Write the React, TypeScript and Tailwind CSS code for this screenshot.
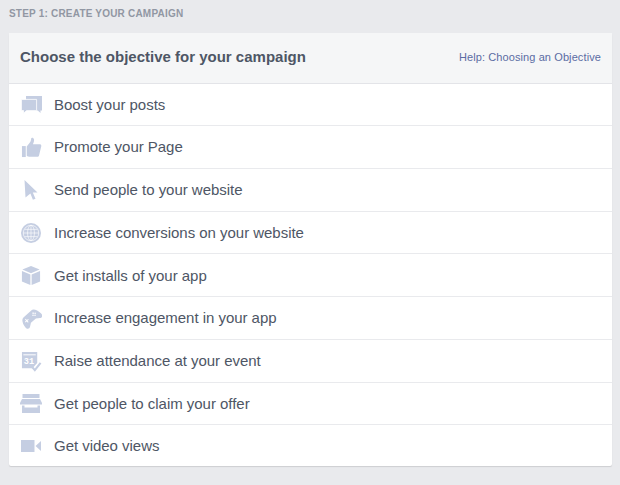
import React from 'react';

const Posts = () => (
  <svg viewBox="0 0 21 18" className="h-[18px] w-[21px]" fill="#c5cee2">
    <path d="M5 0h16v14.500h-1.500V17l-2.800-2.500H5z" />
    <path d="M0.400 3.400H15.600V14.600H5.500L2.600 17.400V14.600H0.400z" stroke="#fff" strokeWidth="0.8" />
  </svg>
);

const Thumb = () => (
  <svg viewBox="0 0 22 22" className="h-[21px] w-[21px]" fill="#c5cee2">
    <path d="M1 9.500h4v11.500H1z" />
    <path d="M6 10l3.500-4.500c.8-1.200 1-2.600 1.200-4.300.1-.9 2.900-.9 3 1.700.1 1.800-.7 3.300-1.200 4.600h7.300c1.600 0 1.700 1.900 1.300 2.800l-2.200 9c-.3 1-1 1.500-2 1.500H8.500C7.200 20.800 6 20 6 19.500z" />
  </svg>
);

const Cursor = () => (
  <svg viewBox="0 0 14 20" className="h-[20px] w-[14px]" fill="#c5cee2">
    <path d="M0.500 0 13.500 12.500H8.800l2.700 6.200-2.600 1.100-2.500-6.300L1.500 17.500z" />
  </svg>
);

const Globe = () => (
  <svg viewBox="0 0 22 22" className="h-[20px] w-[20px]" fill="#c5cee2" stroke="#fff" strokeWidth="0.7">
    <circle cx="11" cy="11" r="11" stroke="none" />
    <circle cx="11" cy="11" r="8.500" fill="none" />
    <ellipse cx="11" cy="11" rx="3.800" ry="8.500" fill="none" />
    <path d="M11 2.500v17M2.500 11h17M4 7h14M4 15h14" fill="none" />
  </svg>
);

const Box = () => (
  <svg viewBox="0 0 22 22" className="h-[21px] w-[20px]" fill="#c5cee2">
    <path d="M11 0.500 20.500 4.500 11 8.500 1.500 4.500z" />
    <path d="M1 6l9.300 3.900V21.500L1 17.500z" />
    <path d="M21 6l-9.300 3.900V21.500l9.300-4z" />
  </svg>
);

const Gamepad = () => (
  <svg viewBox="0 0 22 22" className="h-[21px] w-[21px]">
    <g transform="rotate(-42 11 11)">
      <path
        d="M5.500 4.500h11c3 0 5 4 5.500 9 .3 3-2 4.500-4 3l-3.500-2.500H7.500L4 16.500c-2 1.500-4.300 0-4-3 .5-5 2.500-9 5.500-9z"
        fill="#c5cee2"
      />
      <path d="M3.500 9.500h4.500M5.750 7.250v4.500" stroke="#fff" strokeWidth="1" />
      <circle cx="14.500" cy="9.500" r="0.800" fill="#fff" />
      <circle cx="17.500" cy="9.500" r="0.800" fill="#fff" />
      <circle cx="16" cy="8" r="0.800" fill="#fff" />
      <circle cx="16" cy="11" r="0.800" fill="#fff" />
    </g>
  </svg>
);

const Calendar = () => (
  <svg viewBox="0 0 22 21" className="h-[21px] w-[21px]">
    <path d="M1 0.500h16V12l-5 5.500H1z" fill="#c5cee2" />
    <path d="M2.500 3.500h13" stroke="#fff" strokeWidth="1" />
    <text x="3" y="13" fontSize="9" fontWeight="700" fill="#fff" fontFamily="'Liberation Mono', monospace">31</text>
    <path d="M11.500 16l3 3.500 6-7.500" fill="none" stroke="#c5cee2" strokeWidth="2.200" />
  </svg>
);

const Store = () => (
  <svg viewBox="0 0 22 19" className="h-[19px] w-[22px]" fill="#c5cee2">
    <path d="M2.500 0h17v4h-17z" />
    <path d="M2 5h18l2 4v1.500H0V9z" />
    <path d="M2 11.500h18v7.500H2zM4.500 11.500v2h13v-2z" fillRule="evenodd" />
  </svg>
);

const Video = () => (
  <svg viewBox="0 0 20 12" className="h-[12px] w-[20px]" fill="#c5cee2">
    <path d="M0 0h13.500v12H0z" />
    <path d="M14.500 6 20 1v10z" />
  </svg>
);

const objectives = [
  { label: 'Boost your posts', icon: <Posts /> },
  { label: 'Promote your Page', icon: <Thumb /> },
  { label: 'Send people to your website', icon: <Cursor /> },
  { label: 'Increase conversions on your website', icon: <Globe /> },
  { label: 'Get installs of your app', icon: <Box /> },
  { label: 'Increase engagement in your app', icon: <Gamepad /> },
  { label: 'Raise attendance at your event', icon: <Calendar /> },
  { label: 'Get people to claim your offer', icon: <Store /> },
  { label: 'Get video views', icon: <Video /> },
];

export default function App() {
  return (
    <div className="h-[485px] w-[620px] overflow-hidden bg-[#e9eaed] pl-[9px] pr-2 pt-2 font-['Liberation_Sans',Arial,sans-serif]">
      <h2 className="h-[25px] text-[10px] leading-[11px] font-bold tracking-[0.2px] text-[#9197a3]">STEP 1: CREATE YOUR CAMPAIGN</h2>
      <section className="rounded-[2px] bg-white shadow-[0_1px_1px_rgba(0,0,0,0.12)]">
        <div className="flex h-[50.7px] items-center justify-between border-b border-[#e3e4e8] bg-[#f5f6f7] px-[11px] pb-[2px]">
          <h3 className="text-[15px] font-bold text-[#4e5665]">Choose the objective for your campaign</h3>
          <a className="text-[11px] tracking-[0.1px] text-[#5b6ca3]">Help: Choosing an Objective</a>
        </div>
        {objectives.map((item, i) => (
          <div key={item.label} className={`flex items-center pt-[1px] ${i < objectives.length - 1 ? 'h-[42.7px] border-b border-[#e9eaed]' : 'h-[41px]'}`}>
            <div className="flex w-[45px] justify-center pr-[1px]">{item.icon}</div>
            <span className="text-[15px] tracking-[-0.03px] text-[#4e5665]">{item.label}</span>
          </div>
        ))}
      </section>
    </div>
  );
}
